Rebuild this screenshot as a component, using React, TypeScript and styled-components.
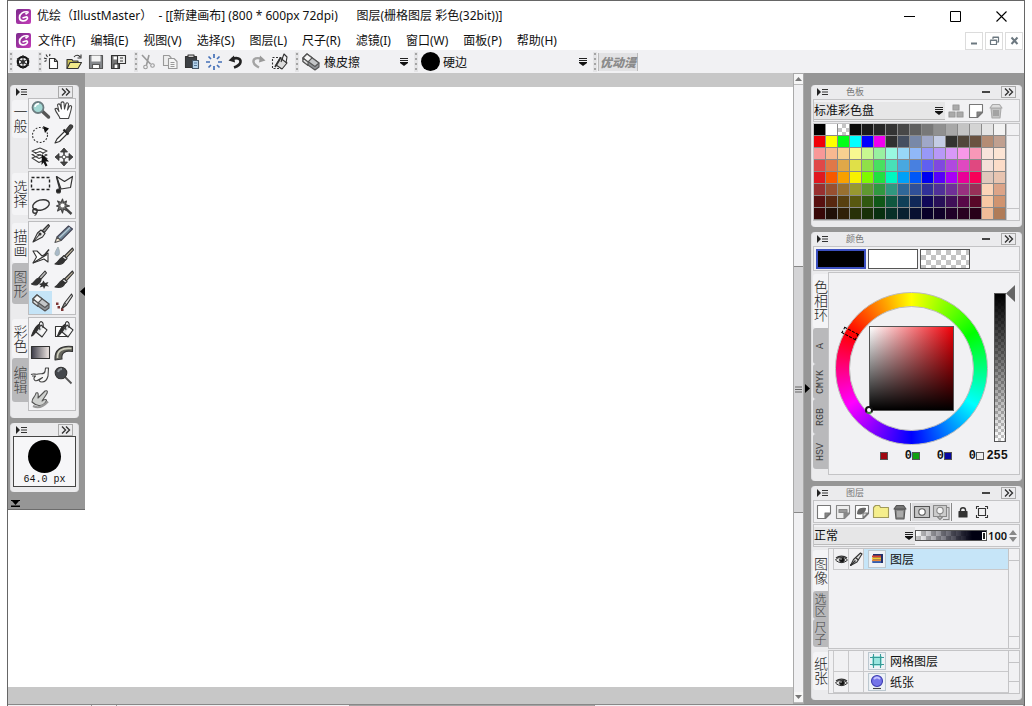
import React from 'react';
import styled, { createGlobalStyle, css } from 'styled-components';

const UI_FONT = '"Noto Sans CJK SC", "Open Sans", sans-serif';
const LATIN_FONT = '"Noto Sans", "Noto Sans CJK SC", sans-serif';
const MONO_FONT = '"Liberation Mono", monospace';

const GlobalStyle = createGlobalStyle`
  *, *::before, *::after { box-sizing: border-box; }
  body { margin: 0; background: #fff; overflow: hidden; font: 12px/16px ${UI_FONT}; color: #111; }
  button, input, select { font: inherit; color: inherit; margin: 0; padding: 0; border: 0; background: none; border-radius: 0; outline: none; }
  button { display: flex; align-items: center; justify-content: center; }
  svg { display: block; flex: none; }
`;

/* ---------- window frame ---------- */

const Frame = styled.div`
  display: flex;
  flex-direction: column;
  min-height: 100vh;
  max-height: 100vh;
  margin: 0 7px;
  border: 1px solid #666;
  border-bottom: 0;
  overflow: hidden;
`;

const TitleBar = styled.header`
  display: flex;
  flex: none;
  align-items: center;
  gap: 6px;
  height: 30px;
  padding-left: 8px;
  font-family: ${LATIN_FONT};
`;

const TitleText = styled.h1`
  flex: 1;
  margin: 0;
  font-size: 12px;
  font-weight: 400;
  white-space: pre;
`;

const WindowControls = styled.div`
  display: flex;
`;

const WindowButton = styled.button`
  width: 46px;
  height: 28px;
`;

const MenuBar = styled.nav`
  display: flex;
  flex: none;
  align-items: center;
  gap: 15px;
  height: 19px;
  padding: 0 1px 0 8px;
  font-family: ${LATIN_FONT};
`;

const MenuItem = styled.button`
  white-space: nowrap;
  &:first-of-type { margin-left: -8px; }
`;

const MdiButtons = styled.div`
  display: flex;
  gap: 2px;
  margin-left: auto;
`;

const MdiButton = styled.button`
  && { margin: 0; }
  width: 18px;
  height: 18px;
  border: 1px solid #dcdcdc;
`;

/* ---------- tool bar ---------- */

const ToolBar = styled.div`
  display: flex;
  flex: none;
  align-items: center;
  height: 23px;
  background: #f1f1f3;
`;

const Grip = styled.span`
  width: 4px;
  height: 20px;
  margin-left: 1px;
  background: radial-gradient(circle at 2px 2px, #a4a4a4 1px, transparent 1px) 0 0 / 4px 5px #e4e4e6;
`;

const ToolGroup = styled.div<{ $width: number }>`
  display: flex;
  align-items: center;
  gap: 2px;
  width: ${p => p.$width}px;
`;

const FieldGroup = styled(ToolGroup)`
  padding-left: 1px;
`;

const BarButton = styled.button`
  width: 20px;
  height: 22px;
`;

const BrandButton = styled.button`
  width: 40px;
  height: 18px;
  margin-left: 1px;
  border: 1px solid #bbb;
  border-width: 0 1px;
  color: #8b8b8b;
  background: #e2e2e4;
  font-size: 12px;
  font-weight: 900;
  font-style: italic;
`;

const SelectBox = styled.label<{ $filled?: boolean }>`
  display: flex;
  flex: 1;
  align-items: center;
  gap: 4px;
  height: 18px;
  padding-right: ${p => (p.$filled ? 2 : 5)}px;
  ${p => p.$filled && css`background: #e6e6e7; border-bottom: 1px solid #bbb;`}
`;

const Select = styled.select`
  flex: 1;
  min-width: 0;
  appearance: none;
`;

const Dot = styled.span<{ $size: number }>`
  width: ${p => p.$size}px;
  height: ${p => p.$size}px;
  border-radius: 50%;
  background: #000;
`;

const BrushTip = styled.span`
  display: grid;
  place-items: center;
  width: 22px;
`;

/* ---------- work area ---------- */

const Main = styled.main`
  display: grid;
  grid-template-columns: 77px minmax(0, 1fr) 11px 220px;
  flex: 1 0 631px;
`;

const CanvasArea = styled.section`
  grid-column: 1 / 3;
  grid-row: 1;
  border: solid #c7c7c7;
  border-width: 14px 0 17px;
  background: #fff;
`;

const LeftDock = styled.aside`
  display: grid;
  grid-template-columns: 69px 1fr;
  grid-column: 1;
  grid-row: 1;
  align-self: start;
  z-index: 1;
  padding-left: 2px;
  background: #969696;
  border-bottom: 1px solid #6c6c6c;
`;

const DockColumn = styled.div`
  display: flex;
  flex-direction: column;
  gap: 5px;
  padding-top: 12px;
`;

const DockHandle = styled.button`
  align-self: center;
  height: 20px;
`;

const DockFooter = styled.div`
  height: 12px;
  padding: 3px 1px 0;
`;

const ScrollColumn = styled.div`
  display: flex;
  flex-direction: column;
  background: #f0f0f2;
  border: 1px solid #aaa;
`;

const ScrollButton = styled.button`
  flex: none;
  height: 11px;
  border: solid #bbb;
  border-width: 0 0 1px;
  background: #f6f6f6;
`;

const ScrollTrack = styled.div`
  display: grid;
  grid-template-rows: 181fr 248fr 179fr;
  flex: 1;
`;

const ScrollThumb = styled.div`
  display: grid;
  grid-row: 2;
  place-items: center;
  background: #d4d4d6;
  border: solid #888;
  border-width: 1px 0;
`;

const RightDock = styled.aside`
  display: grid;
  grid-template-columns: 7px 211px;
  background: #969696;
`;

/* ---------- panels ---------- */

const PanelBox = styled.section`
  padding: 0 1px 5px;
  border: solid #dedee0;
  border-width: 0 1px;
  border-radius: 4px;
  background: #ebebed;
`;

const PanelHead = styled.header<{ $compact: boolean }>`
  display: flex;
  align-items: center;
  height: ${p => (p.$compact ? 13 : 14)}px;
  padding: 0 4px;
`;

const PanelTitle = styled.h2`
  flex: 1;
  margin: 0;
  padding-left: 18px;
  color: #777;
  font-size: 9px;
  font-weight: 400;
  line-height: 12px;
`;

const CollapseButton = styled.button`
  width: 15px;
  height: 12px;
  border: 1px solid #aaa;
`;

const HeadButton = styled.button`
  width: 8px;
  margin-right: 11px;
`;

const Box = styled.div<{ $height?: number; $gap?: number }>`
  display: flex;
  align-items: center;
  gap: ${p => p.$gap ?? 0}px;
  height: ${p => (p.$height ? `${p.$height}px` : 'auto')};
  margin-bottom: 1px;
  border: 1px solid #c4c4c6;
  background: #f1f1f3;
`;

const CurrentBox = styled(Box)`
  padding-left: 2px;
`;

const Tabbed = styled.div`
  display: grid;
  grid-template-columns: 15px minmax(0, 1fr);
  margin-bottom: 1px;
`;

const ToolSection = styled.div`
  display: grid;
  grid-template-columns: 16px 48px;
  margin-bottom: 2px;
`;

const TabList = styled.div`
  display: flex;
  flex-direction: column;
  padding-top: 2px;
`;

const Tab = styled.button<{ $active?: boolean; $height: number; $size?: number; $latin?: boolean }>`
  flex: none;
  width: 100%;
  height: ${p => p.$height}px;
  border-radius: 3px 0 0 3px;
  writing-mode: vertical-rl;
  color: ${p => (p.$active ? '#222' : '#444')};
  background: ${p => (p.$active ? '#f4f4f6' : '#b9b9bb')};
  font-size: ${p => p.$size ?? 14}px;
  font-weight: 300;
  line-height: 15px;
  text-orientation: ${p => (p.$latin ? 'mixed' : 'upright')};
  ${p => p.$latin && css`transform: rotate(180deg); border-radius: 0 3px 3px 0; font-family: ${MONO_FONT};`}
`;

/* ---------- left tools ---------- */

const ToolGrid = styled.div`
  display: grid;
  grid-template-columns: repeat(2, 23px);
  grid-auto-rows: 23px;
  border: 1px solid #bdbdbf;
  background: #f4f4f6;
`;

const ToolButton = styled.button<{ $active?: boolean }>`
  background: ${p => (p.$active ? '#c5e4f7' : 'none')};
`;

const SizePreview = styled.div`
  display: flex;
  flex-direction: column;
  align-items: center;
  height: 51px;
  margin: 0 1px;
  padding-top: 3px;
  border: 1px solid #444;
  background: #f6f6f8;
  font: 10px/13px ${MONO_FONT};
  white-space: pre;
`;

/* ---------- palette ---------- */

const PaletteSelect = styled.div`
  display: flex;
  width: 131px;
`;

const Palette = styled.div`
  display: grid;
  grid-template-columns: repeat(16, 12px);
  grid-auto-rows: 12px;
`;

const CHECKER = 'repeating-conic-gradient(#c4c4c4 0 25%, #fff 0 50%)';

const Swatch = styled.button<{ $color: string }>`
  border: solid #8a8a8a;
  border-width: 0 1px 1px 0;
  background: ${p => (p.$color === 'none' ? `${CHECKER} 0 0 / 8px 8px` : p.$color)};
`;

const MiniScroll = styled.div`
  flex: 1 0 11px;
  align-self: stretch;
  border-left: 1px solid #c4c4c6;
  background: linear-gradient(#c4c4c6, #c4c4c6) 0 11px / 100% 1px no-repeat,
    linear-gradient(#c4c4c6, #c4c4c6) 0 calc(100% - 11px) / 100% 1px no-repeat;
`;

/* ---------- colour panel ---------- */

const Current = styled.button<{ $color: string; $active?: boolean }>`
  width: 50px;
  height: 20px;
  border: ${p => (p.$active ? '2px solid #3c50c0' : '1px solid #555')};
  background: ${p => (p.$color === 'none' ? `${CHECKER} 0 0 / 10px 10px` : p.$color)};
`;

const ColorBody = styled.div`
  display: flex;
  flex-direction: column;
  gap: 4px;
  height: 203px;
  padding: 12px 3px 0 6px;
  border: 1px solid #c4c4c6;
  background: #f1f1f3;
`;

const WheelRow = styled.div`
  display: flex;
  justify-content: space-between;
`;

const Wheel = styled.div`
  position: relative;
  display: grid;
  place-items: center;
  width: 153px;
  height: 153px;
  margin-top: 7px;
  border: 1px solid #bbb;
  border-radius: 50%;
  background: conic-gradient(from -60deg, red, yellow, lime, cyan, blue, magenta, red);
`;

const WheelCore = styled.div`
  display: grid;
  place-items: center;
  width: 125px;
  height: 125px;
  border: 1px solid #bbb;
  border-radius: 50%;
  background: #f1f1f3;
`;

const ShadeSquare = styled.div`
  width: 85px;
  height: 85px;
  border: 1px solid #555;
  background: linear-gradient(transparent, #000), linear-gradient(90deg, #fff, #f00008);
`;

const HueMarker = styled.span`
  position: absolute;
  left: 6px;
  top: 37px;
  width: 16px;
  height: 7px;
  border: 1px dashed #000;
  transform: rotate(28deg);
`;

const ShadeMarker = styled.span`
  position: absolute;
  left: 29px;
  top: 113px;
  width: 8px;
  height: 8px;
  border: 2px solid #111;
  border-color: #111 #111 #3c8c3c #111;
  border-radius: 50%;
  background: #fff;
`;

const AlphaColumn = styled.div`
  display: flex;
  width: 22px;
  align-items: flex-start;
`;

const AlphaSlider = styled.input`
  flex: none;
  appearance: none;
  writing-mode: vertical-lr;
  width: 12px;
  height: 149px;
  margin-top: 8px;
  border: 1px solid #555;
  background: linear-gradient(#000, transparent), ${CHECKER} 0 0 / 6px 6px;
  &::-webkit-slider-thumb { appearance: none; width: 1px; height: 1px; }
`;

const ValueRow = styled.div`
  display: flex;
  justify-content: flex-end;
  padding-right: 8px;
`;

const ValueField = styled.label<{ $color: string }>`
  display: flex;
  align-items: center;
  width: 32px;
  font: bold 12px/14px ${MONO_FONT};
  &::before {
    content: '';
    flex: none;
    width: 8px;
    height: 8px;
    border: 1px solid #555;
    background: ${p => p.$color};
  }
`;

const ValueInput = styled.input`
  width: 100%;
  min-width: 0;
  text-align: right;
`;

/* ---------- layers ---------- */

const Separator = styled.span`
  width: 1px;
  height: 18px;
  margin: 0 1px;
  background: #888;
`;

const LayerTool = styled.button<{ $active?: boolean }>`
  width: 19px;
  height: 18px;
  background: ${p => (p.$active ? '#dcdcde' : 'none')};
`;

const OpacitySlider = styled.input`
  appearance: none;
  width: 72px;
  height: 11px;
  border: 1px solid #555;
  background: linear-gradient(90deg, transparent, #001 80%), ${CHECKER} 0 0 / 10px 10px #fff;
  &::-webkit-slider-thumb {
    appearance: none;
    width: 4px;
    height: 8px;
    border: 1px solid #fff;
    background: #222;
  }
`;

const OpacityInput = styled.input`
  width: 20px;
  font: 600 11px/14px ${LATIN_FONT};
  text-align: right;
`;

const LayerList = styled.div<{ $height: number }>`
  display: flex;
  height: ${p => p.$height}px;
  border: 1px solid #c4c4c6;
  background: #f1f1f3;
`;

const LayerRows = styled.ul`
  flex: none;
  width: 179px;
  margin: 0;
  padding: 0 0 0 4px;
  list-style: none;
`;

const LayerRow = styled.li<{ $active?: boolean }>`
  display: grid;
  grid-template-columns: 15px 15px 26px 1fr;
  height: 21px;
  border-bottom: 1px solid #c9c9cb;
  background: ${p => (p.$active ? 'linear-gradient(90deg, #f1f1f3 30px, #c6e5f8 30px)' : 'none')};
`;

const LayerCell = styled.button`
  border-left: 1px solid #c9c9cb;
`;

const LayerThumb = styled.span`
  display: flex;
  justify-content: center;
  padding-top: 1px;
  border-left: 1px solid #c9c9cb;
`;

const LayerName = styled.span`
  padding-left: 1px;
  font-size: 12px;
  line-height: 20px;
`;

const StatusBar = styled.footer`
  display: grid;
  grid-template-columns: 84px 25px 233px 245px 1fr;
  flex: none;
  height: 20px;
  border-top: 1px solid #888;
  background: #f1f1f3;
  font: 11px/12px ${MONO_FONT};
`;

const StatusCell = styled.div<{ $thumb?: boolean }>`
  border-right: 1px solid #999;
  background: ${p => (p.$thumb ? '#a4a4a4' : 'none')};
`;

/* ---------- drawings ---------- */

const Svg = ({ w = 22, h = 22, children }: { w?: number; h?: number; children: React.ReactNode }) => (
  <svg width={w} height={h} viewBox={`0 0 ${w} ${h}`} fill="none" stroke="#333" strokeWidth="1.1" strokeLinejoin="round" aria-hidden="true">
    {children}
  </svg>
);

const AppLogo = () => (
  <svg width="15" height="15" viewBox="0 0 15 15" aria-hidden="true">
    <defs>
      <linearGradient id="logo" x1="0" y1="0" x2="1" y2="1">
        <stop offset="0" stopColor="#7c2a8c" />
        <stop offset="1" stopColor="#c43cb8" />
      </linearGradient>
    </defs>
    <rect width="15" height="15" rx="2" fill="url(#logo)" />
    <path d="M12.500 3C7.500 2 3.600 4.500 3.500 8.500c0 4 5.500 4.500 7.600 1.500.8-1.300.2-2.200-1.300-2L6.500 9M12.500 3 9.500 5.200" fill="none" stroke="#fff" strokeWidth="1.700" />
  </svg>
);

const DropMark = () => (
  <svg width="8" height="9" viewBox="0 0 8 9" aria-hidden="true">
    <path d="M0 1.500h8M0 3.500h8" stroke="#222" />
    <path d="M0 5h8v1L4 9 0 6z" fill="#111" />
  </svg>
);

const MenuMark = () => (
  <svg width="11" height="8" viewBox="0 0 11 8" aria-hidden="true">
    <path d="M0 0v8l4-4z" fill="#222" />
    <path d="M5 1.500h6M5 4h6M5 6.500h6" stroke="#333" />
  </svg>
);

const Chevrons = () => (
  <svg width="10" height="8" viewBox="0 0 10 8" fill="none" stroke="#333" strokeWidth="1.400" aria-hidden="true">
    <path d="m1 .500 3.500 3.500L1 7.500M5 .500 8.500 4 5 7.500" />
  </svg>
);

const Triangle = ({ d, w, h, fill = '#000' }: { d: string; w: number; h: number; fill?: string }) => (
  <svg width={w} height={h} viewBox={`0 0 ${w} ${h}`} aria-hidden="true"><path d={d} fill={fill} /></svg>
);

const Eye = () => (
  <svg width="13" height="11" viewBox="0 0 13 11" fill="none" stroke="#333" aria-hidden="true">
    <path d="M.500 6C3 2.500 9 2 12.500 6 9 9.500 4 9.500.500 6Z" fill="#ddd" />
    <path d="M1 4C4 1.500 9 1.500 12 4" strokeWidth="1.300" />
    <circle cx="7" cy="6" r="2.400" fill="#111" />
    <circle cx="6" cy="5" r=".7" fill="#fff" stroke="none" />
  </svg>
);

const Bucket = ({ x = 0 }: { x?: number }) => (
  <g transform={`translate(${x} 0)`}>
    <path d="m11 6 6 5-5 7-6-5Z" fill="#dfe2e4" />
    <path d="m13 9 3 2-4 5-3-2Z" fill="#f8f8f8" stroke="none" />
    <path d="M10 11C8 5 10 1.500 12 3c2 1 1 4 1 6" />
    <path d="M10 5C6 6 4 10 1.500 17c3-1 4-4 7-8.500" fill="#2c2c2c" />
  </g>
);

const Brush = () => (
  <>
    <path d="m19.500 2-8 8 1.800 1.800L20.500 4z" fill="#bfb59f" />
    <path d="m11 9.500 3 3-2 2-3-3Z" fill="#ddd" />
    <path d="M9 11.500c-3 1-3 4-7 6.500 5 1 9-.500 10-4Z" fill="#333" />
  </>
);

const EraserShape = () => (
  <>
    <path d="m3 7 4-4 12 9v4l-4 3L3 10.500Z" fill="#8f9296" stroke="#555" />
    <path d="m3 7 4-4 12 9-4 3.500Z" fill="#c4c6c8" stroke="#555" />
    <path d="m3 7 4-4 5 3.800L8 11Z" fill="#f6f6f6" stroke="#555" />
    <path d="M3 7v3.500l5 4V11Z" fill="#e4e4e4" stroke="#555" />
  </>
);

const toolArt: Record<string, React.ReactNode> = {
  zoom: <><path d="m12 11 6.500 6" strokeWidth="3.500" stroke="#555" strokeLinecap="round" /><circle cx="8" cy="7.500" r="5.500" fill="#a3d8d4" stroke="#6b7c80" strokeWidth="1.800" /><path d="M5 7q.500-3 4-3.500" stroke="#fff" strokeWidth="1.500" /></>,
  hand: <path d="M7 18.500C6 15 3 13 2 9c1.500-1.500 3 0 4 2.500L4.500 5c.5-1.500 2-1.500 2.700 0L8.500 9 8 3c.8-1.500 2.400-1.500 3 0l.5 6L13 3.500c1-1.500 2.500-.5 2.500 1l-1 5.500 2-4c1.500-1 2.500 0 2 1.500-.5 3.500-2 8-3 11Z" fill="#fff" stroke="#444" />,
  rotate: <><circle cx="10" cy="12" r="7.500" strokeDasharray="1.800 1.600" /><path d="m13 3 6 2.500-4 4.500z" fill="#111" stroke="none" /></>,
  picker: <><path d="m12 8-8 8-2 4 4.500-1.500 8-8" fill="#fff" /><path d="m10.500 6.500 5 5" strokeWidth="2.200" stroke="#222" /><path d="m12.500 7.500 4-5c1.500-1.500 4 0 3 2L15 10z" fill="#444" /></>,
  layerSelect: <><path d="m2 12 8-3 7 3.500-8 4zM2 8.500l8-3 7 3.500-8 3.500zM2 5l8-3 7 3-8 4z" fill="#fff" stroke="#444" /><path d="m12 8 7 7.500h-3.500l2 4-2 1-2-4-2 2.500z" fill="#111" stroke="none" /></>,
  move: <><path d="M11 5v12M5 11h12" strokeWidth="1.600" stroke="#444" /><path d="m11 2 3.500 4h-7ZM11 20l3.500-4h-7ZM2 11l4-3.500v7ZM20 11l-4-3.500v7Z" fill="#444" stroke="#333" strokeWidth=".8" /><rect x="9.500" y="9.500" width="3" height="3" fill="#fff" stroke="#555" strokeWidth=".8" /></>,
  marquee: <rect x="1.500" y="4.500" width="18" height="12" strokeDasharray="3 2" strokeWidth="1.400" stroke="#222" />,
  polyLasso: <><path d="m3.500 3.500 8 5 8-5-2 11-9.500 1.500Z" fill="#f6f6f6" strokeWidth="1.200" /><path d="M3.500 3.500 7 17" strokeWidth="1.500" /><circle cx="5.500" cy="18" r="2" fill="#222" /></>,
  lasso: <><ellipse cx="11" cy="9" rx="8.500" ry="5" transform="rotate(-15 11 9)" strokeWidth="1.400" /><circle cx="5" cy="15" r="2.200" strokeWidth="1.400" /><path d="M6.500 16.500q0 2.500-2 3" /></>,
  wand: <><path d="m12 12 6.500 6" strokeWidth="2.400" stroke="#444" /><path d="m9.500 3 1 3.500L13.500 5l-1 3.500 4 1.500-4 1 1 3.500-3-1.500-1 4-1.500-4-3.500 2 1.500-4L3.500 10 6.500 8.500l-2-3.500L8 6.500Z" fill="#777" stroke="#444" /><circle cx="9.500" cy="9.500" r="2" fill="#fff" stroke="none" /></>,
  pen: <><path d="m18.500 1.500-6 6 2 2 5-6.500z" fill="#999" /><path d="m11 7 4 3.500L12.500 14 3 19l4.500-9Z" fill="#ececec" /><path d="m3.500 18.500 6-7" /><circle cx="10" cy="11" r="1" fill="#333" /></>,
  pencil: <><path d="M4 14 15.500 3l4 3L8 17.500Z" fill="#6f8799" stroke="#445" /><path d="m4 14-2 5.500L8 17.500Z" fill="#f3e8d2" stroke="#555" /><path d="m6 15 11-10.500" stroke="#b9cad6" /></>,
  curve: <><path d="M3 5h4l5 5 6-3v9l-4-3-11 4 3.500-6Z" fill="#fff" /><path d="m3 17 14-8.500M14 9.500l5-6" strokeWidth="1.400" /></>,
  watercolor: <><Brush /><path d="M5 1C2 6 1 8 3 9.500c3 1 5-2 2-8.500Z" fill="#a9b9c8" stroke="#9aa" strokeWidth=".8" /></>,
  pattern: <><path d="m15 2-6 6.500 1.800 1.800L16.500 4z" fill="#bbb" /><path d="M9 9c-4 1-4 4-7.500 6 4 2 8 1 9.500-4Z" fill="#333" /><path d="m9 15 3-1 1.500-2.500L15 14l3.500-1-1.500 2.500 2 2-3.500-.5L14 20l-1-2.500-3.500 1 1.500-2Z" fill="#333" stroke="none" /></>,
  brush: <Brush />,
  eraser: <EraserShape />,
  dotPen: <><path d="m18.500 2-7 9 2 2 6-9z" fill="#ddd" /><path d="m11.500 11-3 6 5-4" fill="#999" /><path d="M3 10.500h2.500V13H3zM4.500 14H7v2.500H4.500zM8 16.500h2.500V19H8z" fill="#7c3434" stroke="none" /></>,
  fill: <Bucket />,
  fillRect: <><rect x="2.500" y="7.500" width="12" height="10" fill="#fff" /><Bucket x={3} /></>,
  gradient: <><defs><linearGradient id="grad"><stop stopColor="#3c3c48" /><stop offset="1" stopColor="#f4ece8" /></linearGradient></defs><rect x="1.500" y="4.500" width="18" height="12" fill="url(#grad)" /></>,
  arc: <><path d="M2 18C1 8 8 3 19.500 4.500v5C12 8 8 11 9 17Z" fill="#66665e" /><path d="M4.500 16C4 9 9 5.500 18.500 6.500" stroke="#d0d0c0" strokeWidth="1.600" /></>,
  smudge: <path d="M1 9.500c3-1.500 4 .5 7-.5 3.500-1 6 1 7-2.500l.5-3.500h3l-.5 8c-1 4-3 6-6 6-2.500 0-4-1.500-1.500-3l2-1.500c-3 1-5 4.500-7.500 3-2-1.500-1-3 .5-4.500H2" fill="#f6f6f6" stroke="#444" />,
  dodge: <><path d="m12 12 6.500 6.500" strokeWidth="1.800" stroke="#555" /><circle cx="8" cy="8" r="5.800" fill="#44474c" /><path d="M5 7q1-3 4-3" stroke="#8a8f94" strokeWidth="1.800" /></>,
  blend: <><path d="M2 14c0-5 3-4 4-9 2.500-1 2.500 1.500 2 5l7-7c3-1 3 1 1 4l-4 6c4-3 6-1 3 2-3 4-9 3-13-1Z" fill="#cfd1cf" stroke="#555" /><path d="M3 18c5 2.500 10 1 15-4.500" strokeWidth="2" stroke="#999" /></>,
};

const barArt: Record<string, React.ReactNode> = {
  settings: <><circle cx="10" cy="10" r="5.200" strokeWidth="2.200" stroke="#111" /><circle cx="10" cy="10" r="1.500" fill="#111" /><path d="M10 3v14M4 6.500l12 7M4 13.500l12-7" stroke="#333" /></>,
  new: <><path d="M7.500 6.500h5l3 3v7h-8Z" fill="#fff" /><path d="M12.500 6.500v3h3" /><path d="m4 2.500 1.500 2.500M2 6l3 1M8 2 7.500 4M2.500 9.500l2-1" /></>,
  open: <><path d="M3 16.500V7.500h5l1 1.500h5v2" fill="#c9c15b" /><path d="m3 16.500 3-6h11.500l-3.500 6Z" fill="#f1e98a" /><path d="M10 5c2-2.500 5-2 6 0m1-2.500V6h-3.500" /></>,
  save: <><path d="M3.500 3.500h13v13h-13z" fill="#85888c" stroke="#555" /><path d="M5.500 3.500h9v6h-9z" fill="#f4f4f4" stroke="none" /><path d="M6.500 12.500h7v4h-7z" fill="#fff" stroke="#555" /></>,
  saveAs: <><path d="M3.500 3.500h8v13h-8z" fill="#777" /><path d="M5.500 4.500h5v3h-5z" fill="#fff" stroke="none" /><path d="M9.500 3.500h8v8h-8z" fill="#eee" /><path d="M12 6h3M12 9h3M6 12h4v4.500H6z" fill="#fff" /></>,
  cut: <g stroke="#999"><path d="m4 3 8.500 9M11 3 8.500 13" strokeWidth="1.600" /><circle cx="7.500" cy="15" r="1.800" /><circle cx="14.500" cy="13.500" r="1.800" /></g>,
  copy: <g stroke="#999"><path d="M3.500 3.500H9l2 2v8H3.500z" fill="#eee" /><path d="M8.500 6.500H14l3 3v7H8.500z" fill="#f6f6f6" /><path d="M10.500 10.500h4M10.500 12.500h4M10.500 14.500h4" /></g>,
  paste: <><path d="M3.500 4.500h11v11h-11z" fill="#3c4044" /><path d="M6 3h6v2.500H6z" fill="#ccc" /><path d="M10.500 8.500h6v8h-6z" fill="#b6d5ee" stroke="#456" /><path d="M12 11h3M12 13.500h3" stroke="#579" /></>,
  burst: <g stroke="#4470b8" strokeWidth="1.700"><path d="M10 2v4M10 14v4M2 10h4M14 10h4M4.500 4.500l2.500 2.500M13 13l2.500 2.500M4.500 15.500 7 13M13 7l2.500-2.500" /></g>,
  undo: <><path d="M6 7c5-2 9-.5 8.500 3-.3 2.500-2.500 4-6.500 5.500" stroke="#222" strokeWidth="2.600" /><path d="m2.500 8.500 5.500-5 1 7z" fill="#222" stroke="none" /></>,
  redo: <><path d="M14 7c-5-2-9-.5-8.500 3 .3 2.500 2.500 4 5.500 5.500" stroke="#a4a4a4" strokeWidth="2.400" /><path d="m17.500 8.500-5.500-5-1 7z" fill="#999" stroke="none" /></>,
  clear: <><rect x="2.500" y="5.500" width="10" height="11" strokeDasharray="2 1.500" /><path d="m10 6 7 5-5 6-6-4Z" fill="#dcdcdc" /><path d="m11 10 3-8 3 3-1 6" /><path d="m5 15 5-8" strokeWidth="1.800" /></>,
};

const page = 'M2.500 2.500h13v8l-5 5h-8z';
const layerArt: Record<string, React.ReactNode> = {
  newLayer: <g stroke="#777"><path d={page} fill="#fff" /><path d="M15 10h-5v5z" fill="#888" /></g>,
  groupLayer: <g stroke="#888"><path d={page} fill="#eee" /><path d="M5 6.500h8v3H5z" fill="#999" /><path d="M15 10h-5v5z" fill="#888" /></g>,
  maskLayer: <g stroke="#777"><path d={page} fill="#fff" /><path d="M4 11c0-6 4-7 9-6 0 4-4 8-9 6Z" fill="#666" stroke="none" /><path d="M15 10h-5v5z" fill="#ddd" /></g>,
  folder: <path d="M1.500 14.500v-10l2-2h4l1 2h8v10z" fill="#f5ee8c" stroke="#a09a5a" />,
  trash: <g stroke="#555"><path d="m4 6 1 10h8l1-10z" fill="#888" /><path d="M3 6h12l-2.500-3.500h-7Z" fill="#777" /><path d="M7 8v6M9 8v6M11 8v6" stroke="#ddd" strokeWidth=".8" /></g>,
  mask: <><path d="M1.500 3.500h15v11h-15z" fill="#c4c4c4" stroke="#555" /><circle cx="9" cy="9" r="3.200" fill="#fff" stroke="#555" /></>,
  clip: <g stroke="#888"><path d="M1.500 2.500h13v11h-13z" fill="#ccc" /><circle cx="8" cy="7.500" r="3.200" fill="#f4f4f4" /><path d="M8 11v3m0 2.500L5.500 14h5z" fill="#fff" /><path d="M15 4.500h2v12H11" /></g>,
  lock: <><path d="M5 8.500h8V14H5z" fill="#333" /><path d="M6.500 8.500V7c0-3 5-3 5 0v1.500" strokeWidth="1.400" /></>,
  frame: <><path d="M5.500 5.500h7v7h-7z" /><path d="M3.500 6V3.500H6M12 3.500h2.500V6M14.500 12v2.500H12M6 14.500H3.500V12" /></>,
  blocks: <g fill="#aaa" stroke="#999"><path d="M6 3h6v5H6zM2 10h6v5H2zM10 10h6v5h-6z" /></g>,
  trashOff: <g stroke="#aaa"><path d="m4 6 1 10h8l1-10z" fill="#c4c4c4" /><path d="M3 6h12l-2.500-3.500h-7Z" fill="#ddd" /><path d="M7 8v6M9 8v6M11 8v6" stroke="#888" /></g>,
  raster: <><path d="M.500.500h17v17H.500z" fill="#eef2f6" stroke="#bcc8d0" /><path d="M5 4h10v9H5z" fill="#22306c" stroke="none" /><path d="M4 6.500h9" stroke="#d84030" strokeWidth="2" /><path d="M4 8.500h9" stroke="#f2cc30" strokeWidth="2" /><path d="M4 10.500h9" stroke="#e88838" strokeWidth="2" /><path d="M4 12h9" stroke="#3c6cc0" strokeWidth="1.500" /></>,
  grid: <><path d="M.500.500h17v17H.500z" fill="#eef2f6" stroke="#bcc8d0" /><path d="M4 4h10v10H4z" fill="#9ae6e0" stroke="none" /><path d="M5.500 2v14M12.500 2v14M2 5.500h14M2 12.500h14" stroke="#3a9a98" /></>,
  paper: <><path d="M.500.500h17v17H.500z" fill="#eef2f6" stroke="#bcc8d0" /><circle cx="9" cy="8" r="5.500" fill="#7474e8" stroke="#3c3cb0" /><path d="M6 6q3-3 6 0" stroke="#c4c4ff" strokeWidth="2" /><path d="M5 15.500h8" stroke="#444" /></>,
  nib: <><path d="m1.500 14.500 3-6 7-6.500 1.500 1-5 8Z" fill="#ddd" /><path d="m1.500 14.500 5-5M7 7l2.500 2" strokeWidth="1.400" /></>,
};

/* ---------- data ---------- */

const title = '优绘（IllustMaster）  - [[新建画布] (800 * 600px 72dpi)      图层(栅格图层 彩色(32bit))]';

const menus = ['文件(F)', '编辑(E)', '视图(V)', '选择(S)', '图层(L)', '尺子(R)', '滤镜(I)', '窗口(W)', '面板(P)', '帮助(H)'];

const toolSections = [
  { tabs: [{ name: '一般', height: 38 }], tools: ['zoom', 'hand', 'rotate', 'picker', 'layerSelect', 'move'] },
  { tabs: [{ name: '选择', height: 42 }], tools: ['marquee', 'polyLasso', 'lasso', 'wand'] },
  { tabs: [{ name: '描画', height: 40 }, { name: '图形', height: 41 }], tools: ['pen', 'pencil', 'curve', 'watercolor', 'pattern', 'brush', 'eraser', 'dotPen'] },
  { tabs: [{ name: '彩色', height: 39 }, { name: '编辑', height: 44 }], tools: ['fill', 'fillRect', 'gradient', 'arc', 'smudge', 'dodge', 'blend'] },
];

const paletteRows = [
  '#000 #fff none #0a0a0a #1a1a1a #272727 #343434 #484848 #606060 #787878 #909090 #a8a8a8 #c4c4c4 #d4d4d4 #e4e4e4 #f2f2f2',
  '#f00008 #ff0 #00ff18 #0ff #00f #f000f0 #303030 #454f60 #7888a8 #a0a8c8 #c4cce4 #333330 #51463a #6a5240 #b48c74 #c0a090',
  '#f89898 #f8b890 #f8d090 #f8f890 #c8f890 #98f0a0 #98f8e0 #98d8f8 #90b8f8 #9898f8 #b898f8 #d898f8 #f898e8 #f898b8 #f8e4dc #fce4d4',
  '#e04848 #e07848 #e0a848 #e0e048 #90e048 #48e060 #48e0b8 #48a8e0 #4880e0 #6060f0 #8048e0 #b048e0 #e048c0 #e04880 #f4e0d8 #fcdcc8',
  '#e01820 #f85800 #f8a000 #f8f000 #80f800 #20e040 #00f8c0 #00a0f8 #0058f8 #0000f0 #5800f8 #a800f8 #e80098 #f80058 #e0c8bc #e8c4b0',
  '#983030 #985030 #987030 #989830 #609830 #309840 #309880 #306898 #305098 #303098 #503098 #703098 #983080 #983058 #fcd4b8 #dca488',
  '#581010 #582810 #584010 #585810 #305810 #105818 #105840 #104058 #102858 #100858 #281058 #401058 #580848 #580828 #f8c8a4 #d09470',
  '#380808 #201008 #302008 #283008 #183008 #083010 #083028 #082030 #081030 #080028 #100028 #200028 #280020 #280018 #f0bc98 #b07c58',
].map(row => row.split(' '));

/* ---------- composed parts ---------- */

const Panel = ({ title: name, children }: { title?: string; children: React.ReactNode }) => (
  <PanelBox>
    <PanelHead $compact={!name}>
      <MenuMark />
      <PanelTitle>{name}</PanelTitle>
      {name && <HeadButton aria-label="最小化"><svg width="8" height="2"><rect width="8" height="2" fill="#444" /></svg></HeadButton>}
      <CollapseButton aria-label="折叠"><Chevrons /></CollapseButton>
    </PanelHead>
    {children}
  </PanelBox>
);

const BarTools = ({ names }: { names: string[] }) => (
  <>{names.map(name => <BarButton key={name} aria-label={name}><Svg w={20} h={20}>{barArt[name]}</Svg></BarButton>)}</>
);

const LayerIcon = ({ name }: { name: string }) => <Svg w={18} h={18}>{layerArt[name]}</Svg>;

const LayerTools = ({ names, active }: { names: string[]; active?: boolean }) => (
  <>{names.map(name => <LayerTool key={name} $active={active} aria-label={name}><LayerIcon name={name} /></LayerTool>)}</>
);

const Dropdown = ({ value, label, filled }: { value: string; label: string; filled?: boolean }) => (
  <SelectBox $filled={filled}>
    <Select aria-label={label}><option>{value}</option></Select>
    <DropMark />
  </SelectBox>
);

const Layer = ({ name, icon, active, visible, pen }: { name: string; icon: string; active?: boolean; visible?: boolean; pen?: boolean }) => (
  <LayerRow $active={active}>
    <LayerCell aria-label="显示">{visible && <Eye />}</LayerCell>
    <LayerCell aria-label="编辑">{pen && <Svg w={14} h={17}>{layerArt.nib}</Svg>}</LayerCell>
    <LayerThumb><LayerIcon name={icon} /></LayerThumb>
    <LayerName>{name}</LayerName>
  </LayerRow>
);

const App = () => (
  <>
    <GlobalStyle />
    <Frame>
      <TitleBar>
        <AppLogo />
        <TitleText>{title}</TitleText>
        <WindowControls>
          <WindowButton aria-label="最小化"><Svg w={11} h={11}><path d="M0 5.500h11" stroke="#000" strokeWidth="1" /></Svg></WindowButton>
          <WindowButton aria-label="最大化"><Svg w={11} h={11}><path d="M.500.500h10v10H.500z" stroke="#000" strokeWidth="1" /></Svg></WindowButton>
          <WindowButton aria-label="关闭"><Svg w={11} h={11}><path d="m.500.500 10 10M10.500.500l-10 10" stroke="#000" strokeWidth="1.100" /></Svg></WindowButton>
        </WindowControls>
      </TitleBar>
      <MenuBar>
        <AppLogo />
        {menus.map(item => <MenuItem key={item}>{item}</MenuItem>)}
        <MdiButtons>
          <MdiButton aria-label="最小化"><Svg w={11} h={11}><path d="M2 8.500h6" stroke="#6c7880" strokeWidth="2" /></Svg></MdiButton>
          <MdiButton aria-label="还原"><Svg w={11} h={11}><path d="M4 4V2h5.500v5H8M1.500 5h6v4.500h-6zM4 2.500h5.500M1.500 5.500h6" stroke="#6c7880" strokeWidth="1.200" /></Svg></MdiButton>
          <MdiButton aria-label="关闭"><Svg w={11} h={11}><path d="m2.500 2.500 6 6.500M8.500 2.500 2.500 9" stroke="#6c7880" strokeWidth="2" /></Svg></MdiButton>
        </MdiButtons>
      </MenuBar>
      <ToolBar>
        <Grip />
        <ToolGroup $width={24}><BarTools names={['settings']} /></ToolGroup>
        <Grip />
        <ToolGroup $width={91}><BarTools names={['new', 'open', 'save', 'saveAs']} /></ToolGroup>
        <Grip />
        <ToolGroup $width={156}><BarTools names={['cut', 'copy', 'paste', 'burst', 'undo', 'redo', 'clear']} /></ToolGroup>
        <Grip />
        <FieldGroup $width={114}>
          <Svg>{toolArt.eraser}</Svg>
          <Dropdown label="工具" value="橡皮擦" />
        </FieldGroup>
        <Grip />
        <FieldGroup $width={174}>
          <BrushTip><Dot $size={19} /></BrushTip>
          <Dropdown label="笔刷" value="硬边" />
        </FieldGroup>
        <Grip />
        <BrandButton>优动漫</BrandButton>
      </ToolBar>

      <Main>
        <CanvasArea aria-label="画布" />
        <LeftDock>
          <DockColumn>
            <Panel>
              {toolSections.map(({ tabs, tools }) => (
                <ToolSection key={tabs[0].name}>
                  <TabList>
                    {tabs.map((tab, i) => <Tab key={tab.name} $active={i === 0} $height={tab.height}>{tab.name}</Tab>)}
                  </TabList>
                  <ToolGrid>
                    {tools.map(tool => (
                      <ToolButton key={tool} $active={tool === 'eraser'} aria-label={tool}><Svg>{toolArt[tool]}</Svg></ToolButton>
                    ))}
                  </ToolGrid>
                </ToolSection>
              ))}
            </Panel>
            <Panel>
              <SizePreview><Dot $size={33} />64.0 px</SizePreview>
            </Panel>
            <DockFooter><Triangle w={9} h={7} d="M0 0h9v1H0zM1 1h7L4.500 5zM0 5.500h9V7H0z" /></DockFooter>
          </DockColumn>
          <DockHandle aria-label="折叠"><Triangle w={5} h={9} d="M5 0v9L0 4.500z" /></DockHandle>
        </LeftDock>

        <ScrollColumn>
          <ScrollButton aria-label="向上"><Triangle w={7} h={4} d="M3.500 0 7 4H0z" fill="#777" /></ScrollButton>
          <ScrollTrack>
            <ScrollThumb><Svg w={7} h={7}><path d="M0 1h7M0 3.500h7M0 6h7" stroke="#666" strokeWidth="1" /></Svg></ScrollThumb>
          </ScrollTrack>
          <ScrollButton aria-label="向下"><Triangle w={7} h={4} d="M0 0h7L3.500 4z" fill="#777" /></ScrollButton>
        </ScrollColumn>

        <RightDock>
          <DockHandle aria-label="折叠"><Triangle w={5} h={9} d="M0 0v9l5-4.500z" /></DockHandle>
          <DockColumn>
            <Panel title="色板">
              <Box $height={23} $gap={1}>
                <PaletteSelect><Dropdown filled label="色板" value="标准彩色盘" /></PaletteSelect>
                <LayerTools names={['blocks', 'newLayer', 'trashOff']} />
              </Box>
              <Box>
                <Palette>
                  {paletteRows.flatMap((row, y) => row.map((color, x) => <Swatch key={`${y}-${x}`} $color={color} aria-label={color} />))}
                </Palette>
                <MiniScroll />
              </Box>
            </Panel>

            <Panel title="颜色">
              <CurrentBox $height={25} $gap={2}>
                <Current $active $color="#000" aria-label="主色" />
                <Current $color="#fff" aria-label="副色" />
                <Current $color="none" aria-label="透明" />
              </CurrentBox>
              <Tabbed>
                <TabList>
                  <Tab $active $height={54}>色相环</Tab>
                  <Tab $latin $height={36} $size={10}>A</Tab>
                  <Tab $latin $height={35} $size={10}>CMYK</Tab>
                  <Tab $latin $height={35} $size={10}>RGB</Tab>
                  <Tab $latin $height={35} $size={10}>HSV</Tab>
                </TabList>
                <ColorBody>
                  <WheelRow>
                    <Wheel>
                      <WheelCore><ShadeSquare /></WheelCore>
                      <HueMarker />
                      <ShadeMarker />
                    </Wheel>
                    <AlphaColumn>
                      <AlphaSlider type="range" aria-label="透明度" defaultValue={0} />
                      <Triangle w={9} h={17} d="M9 0v17L0 8.500z" fill="#666" />
                    </AlphaColumn>
                  </WheelRow>
                  <ValueRow>
                    <ValueField $color="#a00810"><ValueInput aria-label="红" defaultValue="0" /></ValueField>
                    <ValueField $color="#10a010"><ValueInput aria-label="绿" defaultValue="0" /></ValueField>
                    <ValueField $color="#0808a0"><ValueInput aria-label="蓝" defaultValue="0" /></ValueField>
                    <ValueField $color="#eee"><ValueInput aria-label="不透明" defaultValue="255" /></ValueField>
                  </ValueRow>
                </ColorBody>
              </Tabbed>
            </Panel>

            <Panel title="图层">
              <Box $height={23}>
                <LayerTools names={['newLayer', 'groupLayer', 'maskLayer', 'folder', 'trash']} />
                <Separator />
                <LayerTools active names={['mask', 'clip']} />
                <Separator />
                <LayerTools names={['lock', 'frame']} />
              </Box>
              <Box $height={23}>
                <Dropdown filled label="混合模式" value="正常" />
                <OpacitySlider type="range" aria-label="不透明度" defaultValue={100} />
                <OpacityInput aria-label="不透明度数值" defaultValue="100" />
                <Svg w={12} h={14}><path d="m6 1 4 5H2zM6 13l4-5H2z" fill="#888" stroke="none" /></Svg>
              </Box>
              <Tabbed>
                <TabList>
                  <Tab $active $height={41}>图像</Tab>
                  <Tab $height={28} $size={12}>选区</Tab>
                  <Tab $height={28} $size={12}>尺子</Tab>
                </TabList>
                <LayerList $height={101}>
                  <LayerRows><Layer active visible pen name="图层" icon="raster" /></LayerRows>
                  <MiniScroll />
                </LayerList>
              </Tabbed>
              <Tabbed>
                <TabList><Tab $active $height={38}>纸张</Tab></TabList>
                <LayerList $height={44}>
                  <LayerRows>
                    <Layer name="网格图层" icon="grid" />
                    <Layer visible name="纸张" icon="paper" />
                  </LayerRows>
                  <MiniScroll />
                </LayerList>
              </Tabbed>
            </Panel>
          </DockColumn>
        </RightDock>
      </Main>
      <StatusBar>
        <StatusCell>100.0%</StatusCell>
        <StatusCell />
        <StatusCell />
        <StatusCell $thumb />
        <StatusCell />
      </StatusBar>
    </Frame>
  </>
);

export default App;
